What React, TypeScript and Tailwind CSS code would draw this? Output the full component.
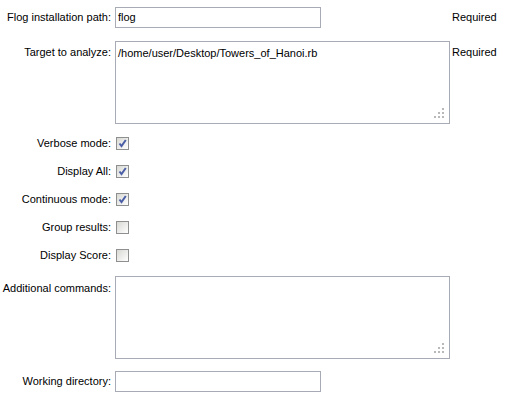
import React from "react";

function Grip() {
  return (
    <svg className="absolute right-[5px] bottom-[5px]" width="10" height="10" viewBox="0 0 10 10">
      <rect x="8" y="0" width="2" height="2" fill="#b9b9b9" />
      <rect x="4" y="4" width="2" height="2" fill="#b9b9b9" />
      <rect x="8" y="4" width="2" height="2" fill="#b9b9b9" />
      <rect x="0" y="8" width="2" height="2" fill="#b9b9b9" />
      <rect x="4" y="8" width="2" height="2" fill="#b9b9b9" />
      <rect x="8" y="8" width="2" height="2" fill="#b9b9b9" />
    </svg>
  );
}

function Checkbox({ checked }: { checked: boolean }) {
  return (
    <div className="ml-[1px] w-[13px] h-[13px] border border-[#8e8f8f] bg-gradient-to-br from-[#d8d8d4] to-white flex items-center justify-center">
      {checked && (
        <svg width="11" height="11" viewBox="0 0 11 11">
          <path d="M2.5 5.5 L4.5 8 L8.8 2" fill="none" stroke="#4b5fa6" strokeWidth="2" />
        </svg>
      )}
    </div>
  );
}

function Label({ children, className = "" }: { children: React.ReactNode; className?: string }) {
  return <div className={`w-[115px] shrink-0 pr-[4px] text-right whitespace-nowrap ${className}`}>{children}</div>;
}

function CheckRow({ label, checked }: { label: string; checked: boolean }) {
  return (
    <div className="flex items-center h-[13px]">
      <Label>{label}</Label>
      <Checkbox checked={checked} />
    </div>
  );
}

export default function App() {
  return (
    <div className="w-[506px] h-[401px] bg-white text-[11px] leading-[13px] text-black font-['Liberation_Sans',Arial,sans-serif] pt-[7px] flex flex-col">
      <div className="flex items-center h-[21px]">
        <Label>Flog installation path:</Label>
        <div className="w-[337px] shrink-0">
          <div className="w-[206px] h-[21px] border border-[#a7abb5] px-[2px] flex items-center">flog</div>
        </div>
        <div>Required</div>
      </div>

      <div className="flex items-start mt-[13px]">
        <Label className="pt-[5px]">Target to analyze:</Label>
        <div className="w-[337px] shrink-0">
          <div className="relative w-[335px] h-[83px] border border-[#a7abb5] px-[2px] pt-[5px]">
            /home/user/Desktop/Towers_of_Hanoi.rb
            <Grip />
          </div>
        </div>
        <div className="pt-[5px]">Required</div>
      </div>

      <div className="flex flex-col gap-[15px] mt-[13px]">
        <CheckRow label="Verbose mode:" checked />
        <CheckRow label="Display All:" checked />
        <CheckRow label="Continuous mode:" checked />
        <CheckRow label="Group results:" checked={false} />
        <CheckRow label="Display Score:" checked={false} />
      </div>

      <div className="flex items-start mt-[14px]">
        <Label className="pt-[6px]">Additional commands:</Label>
        <div className="relative w-[335px] h-[83px] border border-[#a7abb5]">
          <Grip />
        </div>
      </div>

      <div className="flex items-center h-[21px] mt-[12px]">
        <Label>Working directory:</Label>
        <div className="w-[206px] h-[21px] border border-[#a7abb5]" />
      </div>
    </div>
  );
}
